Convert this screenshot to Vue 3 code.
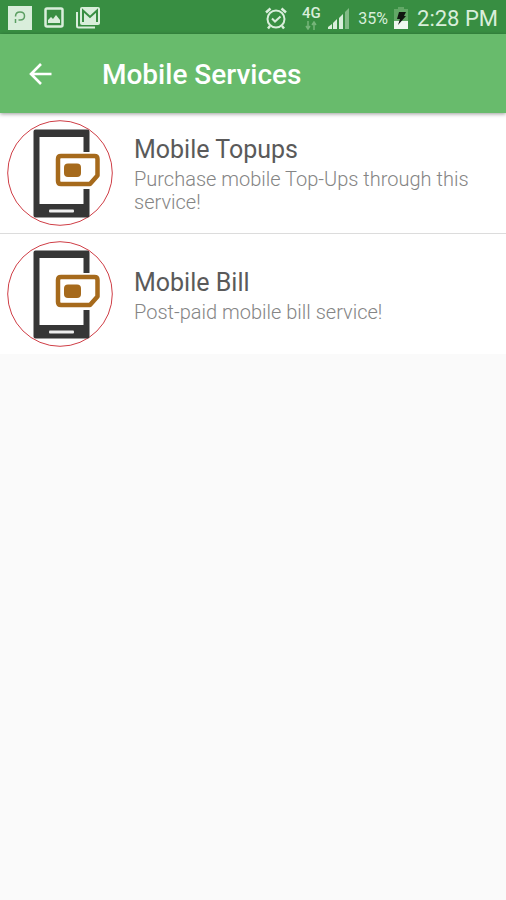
<script setup>
const services = [
  { name: 'Mobile Topups', note: 'Purchase mobile Top-Ups through this service!' },
  { name: 'Mobile Bill', note: 'Post-paid mobile bill service!' }
]
</script>

<template>
  <div class="screen">
    <div class="status">
      <svg class="notices" width="104" height="34" viewBox="0 0 104 34" aria-hidden="true">
        <rect x="8" y="6" width="24" height="24" fill="#d9eedb" />
        <path d="M15.500 23v-4m0-2.500q0-4.500 4.500-4.500t4.500 4q0 4-4.500 4h-1.500" fill="none" stroke="#5c9f63" stroke-width="1.500" />
        <rect x="45.500" y="8.500" width="17" height="18" rx="1.500" fill="none" stroke="#d9eedb" stroke-width="2.500" />
        <path d="M48 23v-3l3-3 2 2 3-4 4 5v3z" fill="#d9eedb" />
        <path d="M77 12v14q0 1.500 1.500 1.500H95" fill="none" stroke="#d9eedb" stroke-width="2" />
        <rect x="80" y="7" width="20" height="18" rx="2" fill="#d9eedb" />
        <path d="M83 22V10.500l7 6.500 7-6.500V22" fill="none" stroke="#388e42" stroke-width="2" />
      </svg>
      <div class="system">
        <svg class="alarm" width="24" height="24" viewBox="0 0 24 24" fill="none" stroke="#d9eedb" aria-hidden="true">
          <circle cx="12" cy="13" r="8.500" stroke-width="2" />
          <path d="M8 12.500l3 3 5.500-5" stroke-width="2" />
          <path d="M2 6.500l4.500-4M22 6.500l-4.500-4M6 20l-2 2.500M18 20l2 2.500" stroke-width="2.500" />
        </svg>
        <div class="network">
          <span>4G</span>
          <svg width="12" height="9" viewBox="0 0 12 9" aria-hidden="true">
            <path d="M3 0v7M1 5l2 3 2-3M9 9V2M7 4l2-3 2 3" fill="none" stroke="#76b57a" stroke-width="1.500" />
          </svg>
        </div>
        <svg class="signal" width="22" height="22" viewBox="0 0 22 22" aria-hidden="true">
          <path d="M0 22v-2l4-3v5zM5 22v-6l4-4v10zM11 22V11l4-4v15z" fill="#d9eedb" />
          <path d="M17 22V5l4-4v21z" fill="#82bb86" />
        </svg>
        <span class="percent">35%</span>
        <svg class="battery" width="14" height="22" viewBox="0 0 14 22" aria-hidden="true">
          <path d="M4 0h6v2h4v13H0V2h4z" fill="#62a866" />
          <path d="M0 14h14v8H0z" fill="#eff8ef" />
          <path d="M5 5h7l-2 4h2l-8 9 2-6H3z" fill="#101510" />
        </svg>
        <span class="time">2:28 PM</span>
      </div>
    </div>
    <header class="bar">
      <button class="back" type="button" aria-label="Back">
        <svg width="24" height="24" viewBox="0 0 24 24" fill="none" stroke="#fff" stroke-width="2.600" aria-hidden="true">
          <path d="M23.500 12H3M13 2L3 12l10 10" />
        </svg>
      </button>
      <h1>Mobile Services</h1>
    </header>
    <main class="list">
      <a v-for="item in services" :key="item.name" class="row" href="#">
        <svg class="emblem" width="106" height="106" viewBox="0 0 106 106" aria-hidden="true">
          <circle cx="53" cy="53" r="52.300" fill="#fff" stroke="#cf3e46" />
          <path fill="#363636" fill-rule="evenodd" d="M28.500 9.500h52a2 2 0 0 1 2 2V32h-6V17H32.500v67h44V69h6v26.500a2 2 0 0 1-2 2h-52a2 2 0 0 1-2-2v-84a2 2 0 0 1 2-2z" />
          <rect x="42" y="89.500" width="25" height="3" rx="1" fill="#eee" />
          <path d="M54 36h33.500q3 0 3 3v16.500L83 64H54q-3 0-3-3V39q0-3 3-3z" fill="#fff" stroke="#a66a1c" stroke-width="4.500" stroke-linejoin="round" />
          <rect x="57" y="43.500" width="17" height="13.500" rx="4" fill="#a66a1c" />
        </svg>
        <span class="copy">
          <span class="name">{{ item.name }}</span>
          <span class="note">{{ item.note }}</span>
        </span>
      </a>
    </main>
  </div>
</template>

<style>
body {
  margin: 0;
  background: #fafafa;
}
</style>

<style scoped>
.screen {
  min-height: 100vh;
  background: #fafafa;
  font-family: Roboto, "Liberation Sans", sans-serif;
}
.status {
  display: flex;
  justify-content: space-between;
  height: 34px;
  background: #388e42;
  color: #d9eedb;
}
.system {
  display: flex;
  align-items: center;
  padding: 2px 8px 0 0;
}
.alarm {
  margin-right: 13px;
}
.network {
  display: flex;
  flex-direction: column;
  align-items: center;
  width: 20px;
  margin-right: 7px;
  font-size: 15px;
  line-height: 15px;
  font-weight: 500;
}
.signal {
  margin-right: 8px;
}
.percent {
  margin-right: 6px;
  font-size: 16px;
}
.battery {
  margin-right: 9px;
}
.time {
  font-size: 22px;
}
.bar {
  position: relative;
  display: flex;
  align-items: center;
  height: 79px;
  background: #68bb6c;
  box-shadow: 0 1px 4px rgba(0, 0, 0, 0.4);
}
.back {
  display: flex;
  margin: 0 34px 0 12px;
  padding: 16px;
  border: 0;
  background: none;
}
.bar h1 {
  margin: 0;
  padding-top: 2px;
  color: #fff;
  font-size: 28px;
  font-weight: 500;
}
.row {
  display: flex;
  align-items: center;
  gap: 21px;
  min-height: 120px;
  padding: 0 24px 0 7px;
  background: #fff;
  color: inherit;
  text-decoration: none;
}
.row + .row {
  border-top: 1px solid #dcdcdc;
}
.emblem {
  flex: none;
}
.copy {
  display: flex;
  flex-direction: column;
  gap: 3px;
  padding-top: 3px;
}
.name {
  color: #5a5a5a;
  font-size: 25px;
  line-height: 30px;
}
.note {
  color: #858585;
  font-size: 20px;
  line-height: 23px;
  font-weight: 300;
}
</style>
